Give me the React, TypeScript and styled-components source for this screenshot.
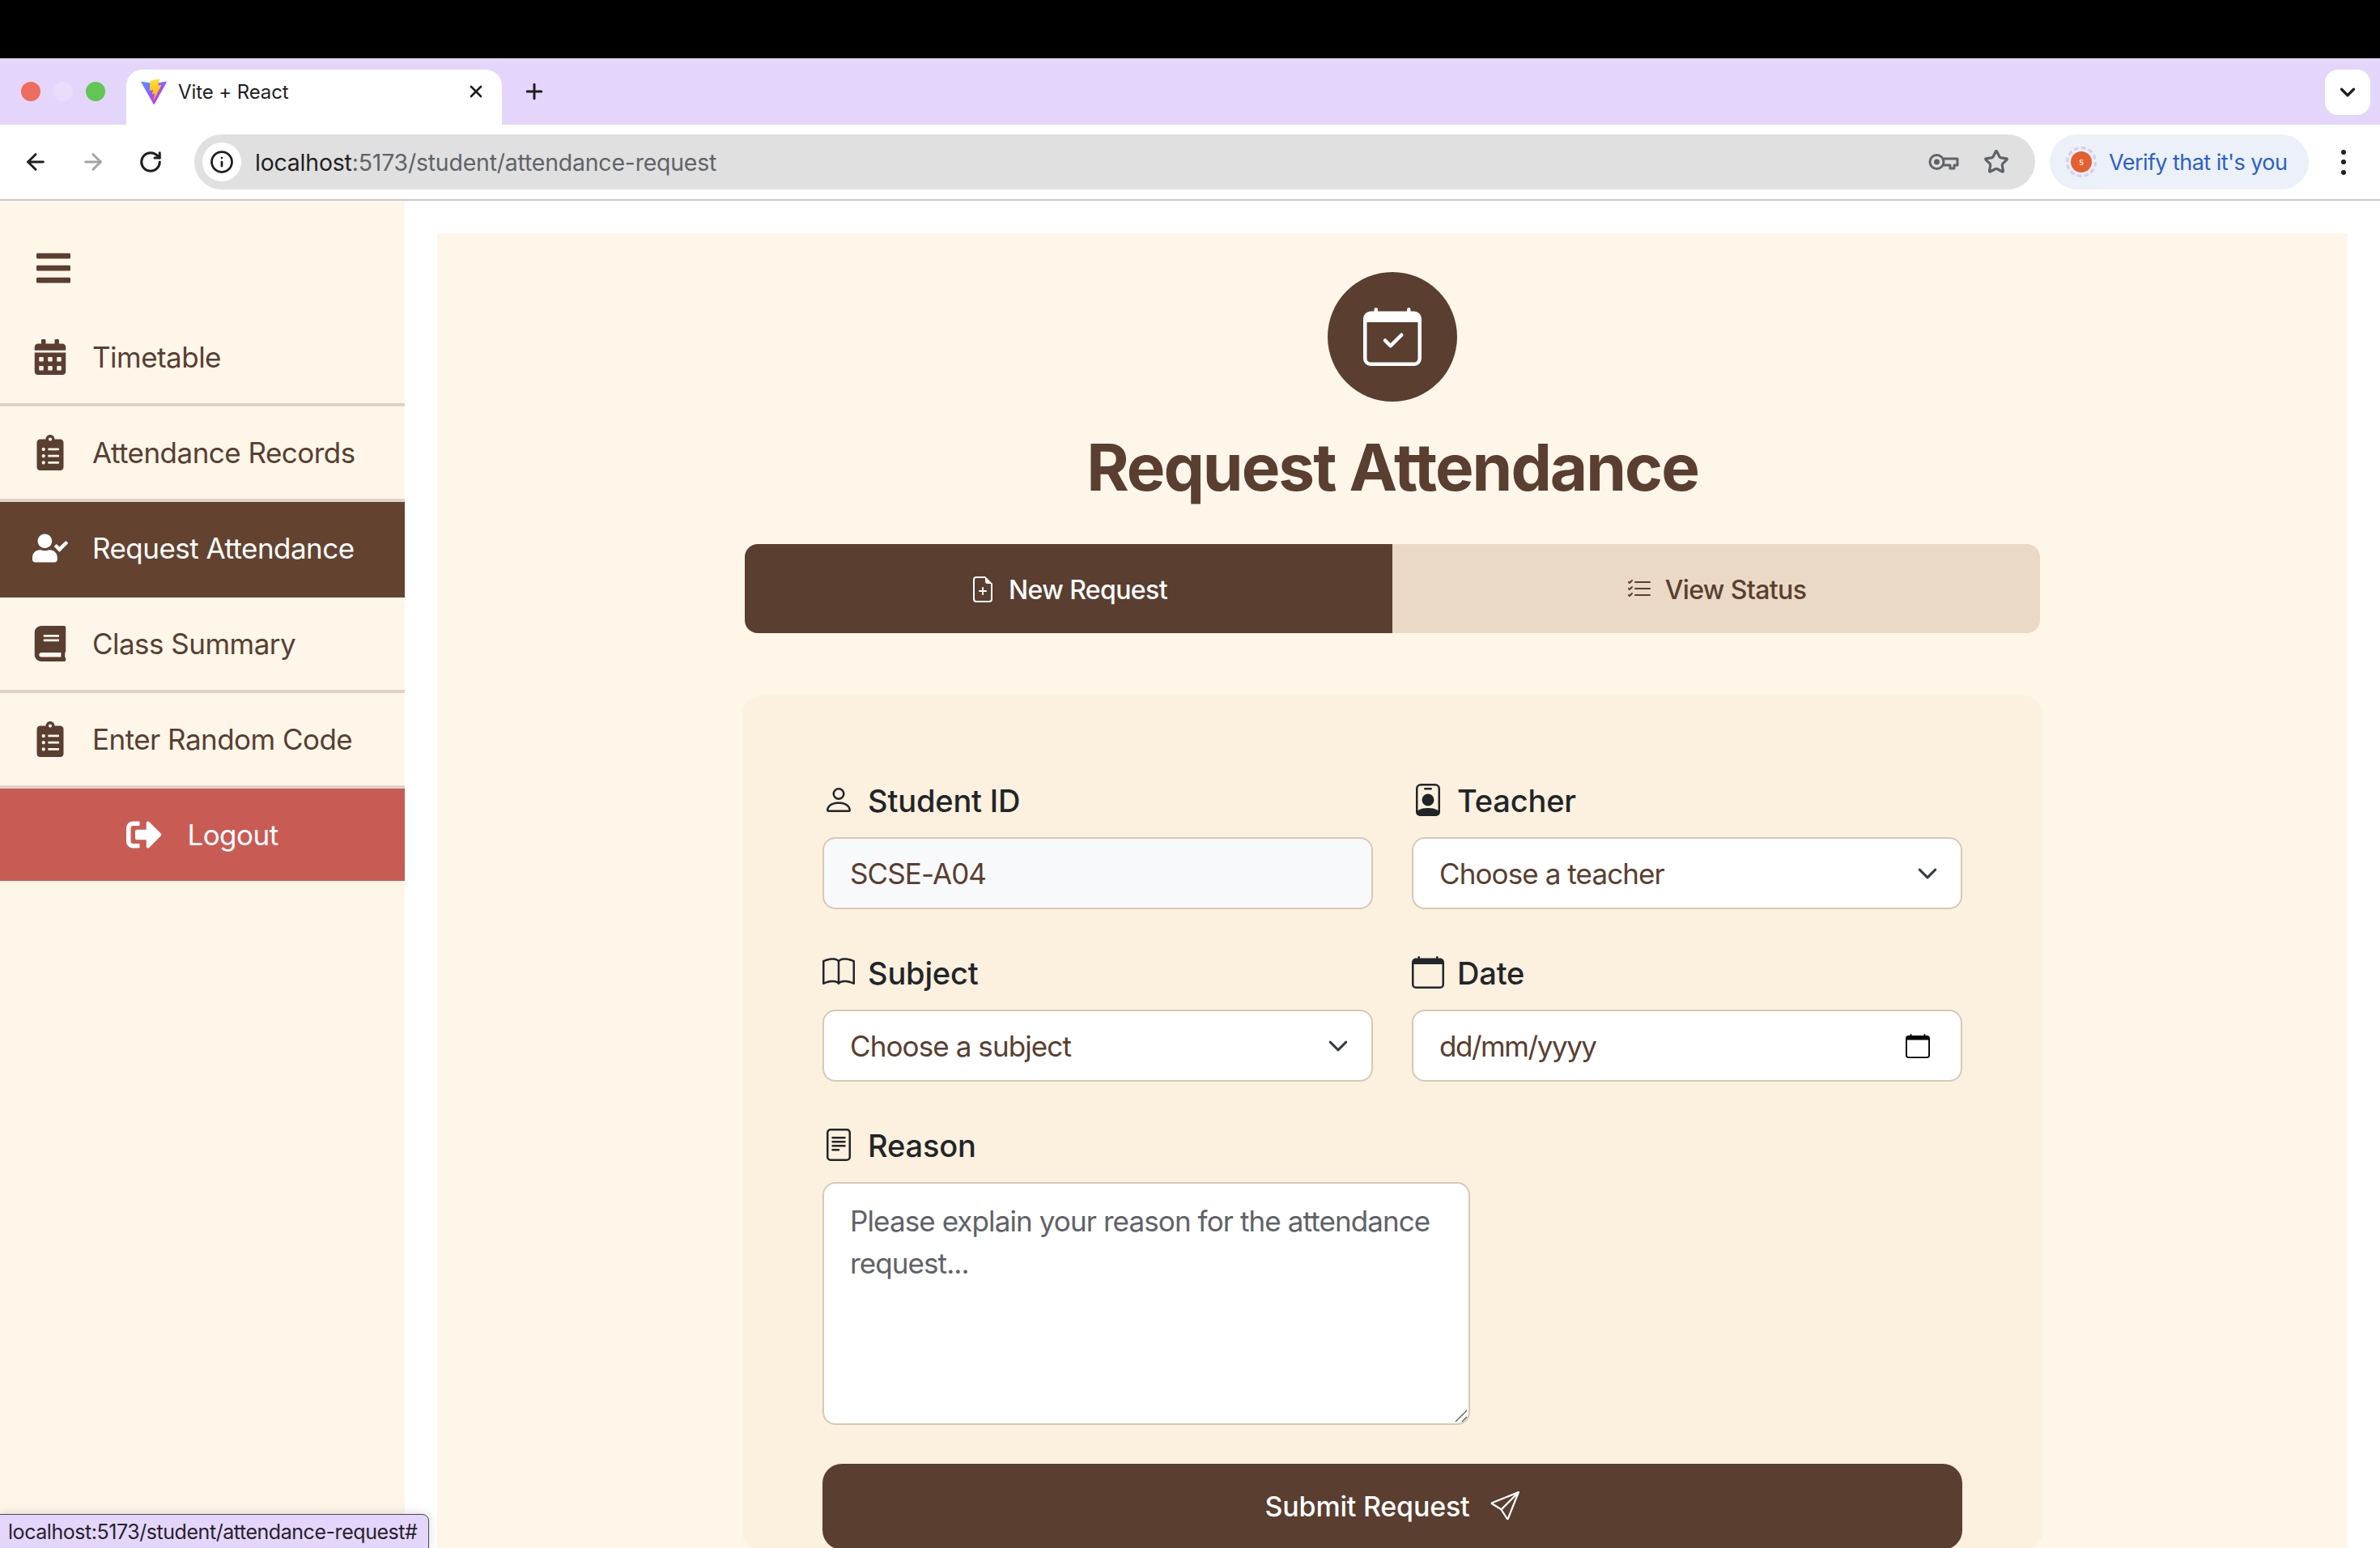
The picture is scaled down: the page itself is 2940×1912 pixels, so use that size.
import React from "react";
import styled, { createGlobalStyle } from "styled-components";
import { ArrowLeft, ArrowRight, RotateCw, Info, Star, ChevronDown, X, Plus } from "lucide-react";
import { FaBars, FaCalendarAlt, FaClipboardList, FaUserCheck, FaBook, FaSignOutAlt } from "react-icons/fa";
import { BsCalendarCheck, BsFileEarmarkPlus, BsListCheck, BsPerson, BsPersonBadge, BsBook, BsCalendar, BsFileText, BsSend } from "react-icons/bs";

const Global = createGlobalStyle`
  html, body { margin: 0; padding: 0; background: #fff; overflow: hidden; }
  * { box-sizing: border-box; }
  body { font-family: Inter, "Liberation Sans", sans-serif; }
`;

const Page = styled.div`
  position: relative; width: 2940px; height: 1912px; overflow: hidden;
  display: flex; flex-direction: column; background: #fff;
`;
const BlackBar = styled.div`height: 72px; background: #000; flex: none;`;
const TabStrip = styled.div`
  height: 82px; flex: none; background: #e4d6fb; display: flex; align-items: flex-end;
`;
const Lights = styled.div`
  display: flex; gap: 16px; padding-left: 26px; width: 156px; align-items: center; align-self: stretch; flex: none;
`;
const Light = styled.span<{ $c: string }>`
  width: 24px; height: 24px; border-radius: 50%; background: ${p => p.$c}; flex: none;
`;
const Tab = styled.div`
  width: 464px; height: 68px; background: #fff; border-radius: 20px 20px 0 0;
  display: flex; align-items: center; padding: 0 20px 14px 16px; gap: 12px; position: relative;
  color: #1f1f1f; font-size: 24px;
`;
const TabTitle = styled.span`flex: 1; letter-spacing: -0.1px;`;
const NewTab = styled.div`
  width: 80px; display: flex; justify-content: center; align-items: center; height: 68px; padding-bottom: 14px; color: #1f1f1f;
`;
const StripSpacer = styled.div`flex: 1;`;
const ListBtn = styled.div`
  width: 56px; height: 56px; border-radius: 16px; background: #fff; margin: 0 12px 12px 0;
  display: flex; align-items: center; justify-content: center; color: #1f1f1f;
`;
const Toolbar = styled.div`
  height: 94px; flex: none; background: #fff; border-bottom: 2px solid #c9c9c9;
  display: flex; align-items: flex-start; padding: 12px 0 0 0;
`;
const NavIcons = styled.div`
  display: flex; width: 240px; padding-left: 28px; gap: 39px; height: 68px; align-items: center; flex: none;
`;
const NavIcon = styled.span<{ $dim?: boolean }>`
  width: 32px; height: 32px; display: flex; align-items: center; justify-content: center;
  color: ${p => p.$dim ? "#a3a3a3" : "#1f1f1f"};
`;
const UrlBar = styled.div`
  width: 2274px; height: 68px; border-radius: 34px; background: #e0e0e0; flex: none;
  display: flex; align-items: center; padding: 0 32px 0 10px;
`;
const InfoBtn = styled.span`
  width: 48px; height: 48px; border-radius: 50%; background: #fff; display: flex; align-items: center; justify-content: center; color: #1f1f1f; flex: none;
`;
const UrlText = styled.div`
  flex: 1; margin-left: 17px; font-size: 28.4px; letter-spacing: -0.18px; color: #5f6368; white-space: nowrap;
`;
const UrlHost = styled.span`color: #1f1f1f;`;
const UrlActions = styled.div`display: flex; align-items: center; gap: 30px; color: #5f6368;`;
const VerifyPill = styled.div`
  margin-left: 18px; width: 320px; height: 68px; border-radius: 34px; background: #ecf1f9; flex: none;
  display: flex; align-items: center; padding-left: 20px; gap: 15px; color: #2b5fcc; font-size: 27px; letter-spacing: -0.55px; white-space: nowrap;
`;
const AvatarRing = styled.span`
  position: relative; width: 38px; height: 38px; border-radius: 50%; display: flex; align-items: center; justify-content: center; flex: none;
  border: 3px dashed #d8ccf0;
`;
const AvatarDot = styled.span`
  width: 26px; height: 26px; border-radius: 50%; background: #e55f30; color: #fff; font-size: 11px;
  display: flex; align-items: center; justify-content: center;
`;
const Dots = styled.div`
  display: flex; flex-direction: column; gap: 6.5px; margin-left: 40px; height: 68px; justify-content: center; flex: none;
`;
const Dot = styled.span`width: 6px; height: 6px; border-radius: 50%; background: #1f1f1f;`;

const Body = styled.div`flex: 1; display: flex; min-height: 0;`;
const Sidebar = styled.aside`
  width: 500px; flex: none; background: #fff6ea; display: flex; flex-direction: column; color: #5a3e30;
`;
const MenuRow = styled.div`
  height: 136px; padding: 59px 0 0 42px; flex: none;
`;
const Item = styled.a<{ $active?: boolean; $line?: boolean }>`
  height: 118px; flex: none; display: flex; align-items: center; padding-left: 40px; gap: 30px;
  font-size: 35px; letter-spacing: -0.53px; text-decoration: none;
  color: ${p => p.$active ? "#fff" : "#5a3e30"};
  background: ${p => p.$active ? "#634330" : "transparent"};
  border-bottom: 4px solid ${p => p.$line ? "#dfd3c6" : "transparent"};
`;
const ItemIcon = styled.span`
  width: 44px; height: 44px; flex: none; display: flex; align-items: center; justify-content: center;
`;
const LogoutItem = styled.a`
  height: 114px; flex: none; display: flex; align-items: center; justify-content: center; gap: 31px;
  background: #c95b55; color: #fff; font-size: 35px; letter-spacing: -0.53px; text-decoration: none;
`;

const Main = styled.main`flex: 1; padding: 40px 40px 0; min-width: 0;`;
const Card = styled.section`
  background: #fff6ea; display: flex; flex-direction: column; align-items: center; padding-top: 48px; height: 1700px;
`;
const Badge = styled.div`
  width: 160px; height: 160px; border-radius: 50%; background: #5a3e30; color: #fff;
  display: flex; align-items: center; justify-content: center; flex: none;
`;
const Title = styled.h1`
  margin: 33px 0 47px; font-size: 80px; line-height: 96px; font-weight: 700; color: #5a3e30; letter-spacing: -2px;
`;
const Tabs = styled.div`
  width: 1600px; height: 110px; display: flex; border-radius: 16px; overflow: hidden; flex: none;
`;
const TabBtn = styled.div<{ $active?: boolean }>`
  flex: 1; display: flex; align-items: center; justify-content: center; gap: 16px; padding-top: 2px;
  font-size: 32px; font-weight: 500; letter-spacing: -0.6px;
  background: ${p => p.$active ? "#5a3e30" : "#e9d9c5"};
  color: ${p => p.$active ? "#fff" : "#5a3e30"};
`;
const FormCard = styled.form`
  width: 1604px; margin-top: 78px; background: #fcf0de; border-radius: 24px; padding: 104px 98px 0;
  box-shadow: 0 0 4px rgba(90, 62, 48, 0.06); flex: none;
`;
const Grid = styled.div`display: grid; grid-template-columns: 680px 680px; column-gap: 48px; row-gap: 54px;`;
const Field = styled.div``;
const Label = styled.label`
  display: flex; align-items: center; gap: 16px; height: 48px; margin-bottom: 22px; padding-top: 1px;
  font-size: 38px; font-weight: 500; color: #212529; letter-spacing: -0.15px;
`;
const LabelIcon = styled.span`width: 40px; height: 40px; flex: none; display: flex; margin-top: -1px;`;
const controlCss = `
  width: 100%; height: 89px; border: 2px solid #d8c8b6; border-radius: 16px; padding: 0 32px;
  font-family: Inter, "Liberation Sans", sans-serif; font-size: 35px; letter-spacing: -0.9px; color: #5a3e30; outline: none; display: block;
`;
const TextInput = styled.input`${controlCss} background: #f8f9fa;`;
const Select = styled.select`
  ${controlCss} appearance: none; -webkit-appearance: none; background-color: #fff;
  background-image: url("data:image/svg+xml,%3csvg xmlns='http://www.w3.org/2000/svg' viewBox='0 0 16 16'%3e%3cpath fill='none' stroke='%23343a40' stroke-linecap='round' stroke-linejoin='round' stroke-width='1.8' d='m2 5 6 6 6-6'/%3e%3c/svg%3e");
  background-repeat: no-repeat; background-position: right 28px center; background-size: 26px 26px;
`;
const DateBox = styled.div`
  ${controlCss} background: #fff; display: flex; align-items: center; justify-content: space-between; padding-right: 38px; letter-spacing: -1.45px;
`;
const DateIcon = styled.span`display: flex; color: #000;`;
const TextAreaWrap = styled.div`position: relative; width: 800px; height: 300px;`;
const TextArea = styled.textarea`
  ${controlCss} width: 800px; height: 300px; background: #fff; padding: 20px 32px; line-height: 52px; margin: 0; resize: none;
  &::placeholder { color: #5f6266; opacity: 1; }
`;
const Grip = styled.svg`
  position: absolute; right: 3px; bottom: 3px; width: 16px; height: 16px; pointer-events: none;
`;
const ReasonField = styled.div`margin-top: 54px;`;
const Submit = styled.button`
  margin-top: 48px; width: 1408px; height: 106px; border: none; border-radius: 24px; background: #5a3e30; color: #fff; padding: 0 0 2px;
  font-family: Inter, "Liberation Sans", sans-serif; font-size: 34px; font-weight: 500; letter-spacing: -0.2px;
  display: flex; align-items: center; justify-content: center; gap: 26px;
`;
const StatusBubble = styled.div`
  position: absolute; left: -2px; bottom: -2px; width: 532px; height: 44px; background: #e4d6fb;
  border: 1.5px solid #4a4550; border-radius: 0 8px 0 0; padding: 6px 0 0 11px; font-size: 25px; letter-spacing: -0.45px; color: #26222c; white-space: nowrap;
  box-shadow: 0 0 14px rgba(0, 0, 0, 0.15);
`;

const ViteLogo = () => (
  <svg width="36" height="36" viewBox="0 0 32 32" style={{ flex: "none" }}>
    <defs>
      <linearGradient id="va" x1="6" y1="33" x2="235" y2="344" gradientTransform="scale(0.0781)" gradientUnits="userSpaceOnUse">
        <stop stopColor="#41A6FF" /><stop offset="1" stopColor="#BD34FE" />
      </linearGradient>
      <linearGradient id="vb" x1="16" y1="2" x2="19" y2="27" gradientUnits="userSpaceOnUse">
        <stop stopColor="#FFEA83" /><stop offset=".08" stopColor="#FFDD35" /><stop offset="1" stopColor="#FFA800" />
      </linearGradient>
    </defs>
    <path fill="url(#va)" d="M29.883 6.146 16.8 29.541c-.27.483-.964.486-1.238.005L2.22 6.148c-.299-.524.149-1.158.742-1.052l13.097 2.34a.71.71 0 0 0 .253 0l12.823-2.337c.591-.108 1.041.521.748 1.047Z" />
    <path fill="url(#vb)" d="M22.037 2.2 12.355 4.1a.356.356 0 0 0-.287.328l-.596 10.063a.356.356 0 0 0 .435.368l2.696-.622a.356.356 0 0 1 .429.418l-.801 3.922a.356.356 0 0 0 .452.412l1.665-.506a.356.356 0 0 1 .451.413l-1.273 6.161c-.08.385.432.595.646.265l.143-.22 7.89-15.747a.356.356 0 0 0-.386-.51l-2.775.536a.356.356 0 0 1-.41-.448l1.811-6.278a.356.356 0 0 0-.41-.449Z" />
  </svg>
);

const KeyIcon = () => (
  <svg width="38" height="24" viewBox="0 0 38 24" fill="none" stroke="#5f6368" strokeWidth="3">
    <circle cx="10.5" cy="12" r="8.5" />
    <circle cx="10.5" cy="12" r="3.5" fill="#5f6368" stroke="none" />
    <path d="M19 8h17v8h-4v4h-5v-4h-8" strokeLinejoin="round" />
  </svg>
);

export default function App() {
  return (
    <Page>
      <Global />
      <BlackBar />
      <TabStrip>
        <Lights>
          <Light $c="#ee6d5e" /><Light $c="#e9ddfb" /><Light $c="#62c554" />
        </Lights>
        <Tab>
          <ViteLogo />
          <TabTitle>Vite + React</TabTitle>
          <X size={24} strokeWidth={2.6} />
        </Tab>
        <NewTab><Plus size={30} strokeWidth={2.4} /></NewTab>
        <StripSpacer />
        <ListBtn><ChevronDown size={30} strokeWidth={2.6} /></ListBtn>
      </TabStrip>
      <Toolbar>
        <NavIcons>
          <NavIcon><ArrowLeft size={32} strokeWidth={2.2} /></NavIcon>
          <NavIcon $dim><ArrowRight size={32} strokeWidth={2.2} /></NavIcon>
          <NavIcon><RotateCw size={30} strokeWidth={2.4} /></NavIcon>
        </NavIcons>
        <UrlBar>
          <InfoBtn><Info size={30} strokeWidth={2.2} /></InfoBtn>
          <UrlText><UrlHost>localhost</UrlHost>:5173/student/attendance-request</UrlText>
          <UrlActions>
            <KeyIcon />
            <Star size={32} strokeWidth={2.4} />
          </UrlActions>
        </UrlBar>
        <VerifyPill>
          <AvatarRing><AvatarDot>s</AvatarDot></AvatarRing>
          Verify that it's you
        </VerifyPill>
        <Dots><Dot /><Dot /><Dot /></Dots>
      </Toolbar>
      <Body>
        <Sidebar>
          <MenuRow><FaBars size={48} /></MenuRow>
          <Item $line><ItemIcon><FaCalendarAlt size={44} /></ItemIcon>Timetable</Item>
          <Item $line><ItemIcon><FaClipboardList size={44} /></ItemIcon>Attendance Records</Item>
          <Item $active><ItemIcon><FaUserCheck size={44} /></ItemIcon>Request Attendance</Item>
          <Item $line><ItemIcon><FaBook size={44} /></ItemIcon>Class Summary</Item>
          <Item $line><ItemIcon><FaClipboardList size={44} /></ItemIcon>Enter Random Code</Item>
          <LogoutItem><FaSignOutAlt size={44} />Logout</LogoutItem>
        </Sidebar>
        <Main>
          <Card>
            <Badge><BsCalendarCheck size={72} /></Badge>
            <Title>Request Attendance</Title>
            <Tabs>
              <TabBtn $active><BsFileEarmarkPlus size={32} />New Request</TabBtn>
              <TabBtn><BsListCheck size={32} />View Status</TabBtn>
            </Tabs>
            <FormCard>
              <Grid>
                <Field>
                  <Label><LabelIcon><BsPerson size={40} /></LabelIcon>Student ID</Label>
                  <TextInput value="SCSE-A04" readOnly />
                </Field>
                <Field>
                  <Label><LabelIcon><BsPersonBadge size={40} /></LabelIcon>Teacher</Label>
                  <Select defaultValue=""><option value="">Choose a teacher</option></Select>
                </Field>
                <Field>
                  <Label><LabelIcon><BsBook size={40} /></LabelIcon>Subject</Label>
                  <Select defaultValue=""><option value="">Choose a subject</option></Select>
                </Field>
                <Field>
                  <Label><LabelIcon><BsCalendar size={40} /></LabelIcon>Date</Label>
                  <DateBox>dd/mm/yyyy<DateIcon><BsCalendar size={30} /></DateIcon></DateBox>
                </Field>
              </Grid>
              <ReasonField>
                <Label><LabelIcon><BsFileText size={40} /></LabelIcon>Reason</Label>
                <TextAreaWrap>
                  <TextArea placeholder="Please explain your reason for the attendance request..." />
                  <Grip viewBox="0 0 16 16" fill="none" stroke="#555" strokeWidth="1.2">
                    <path d="M15 1 1 15M15 9l-6 6" />
                  </Grip>
                </TextAreaWrap>
              </ReasonField>
              <Submit type="button">Submit Request<BsSend size={36} /></Submit>
            </FormCard>
          </Card>
        </Main>
      </Body>
      <StatusBubble>localhost:5173/student/attendance-request#</StatusBubble>
    </Page>
  );
}
